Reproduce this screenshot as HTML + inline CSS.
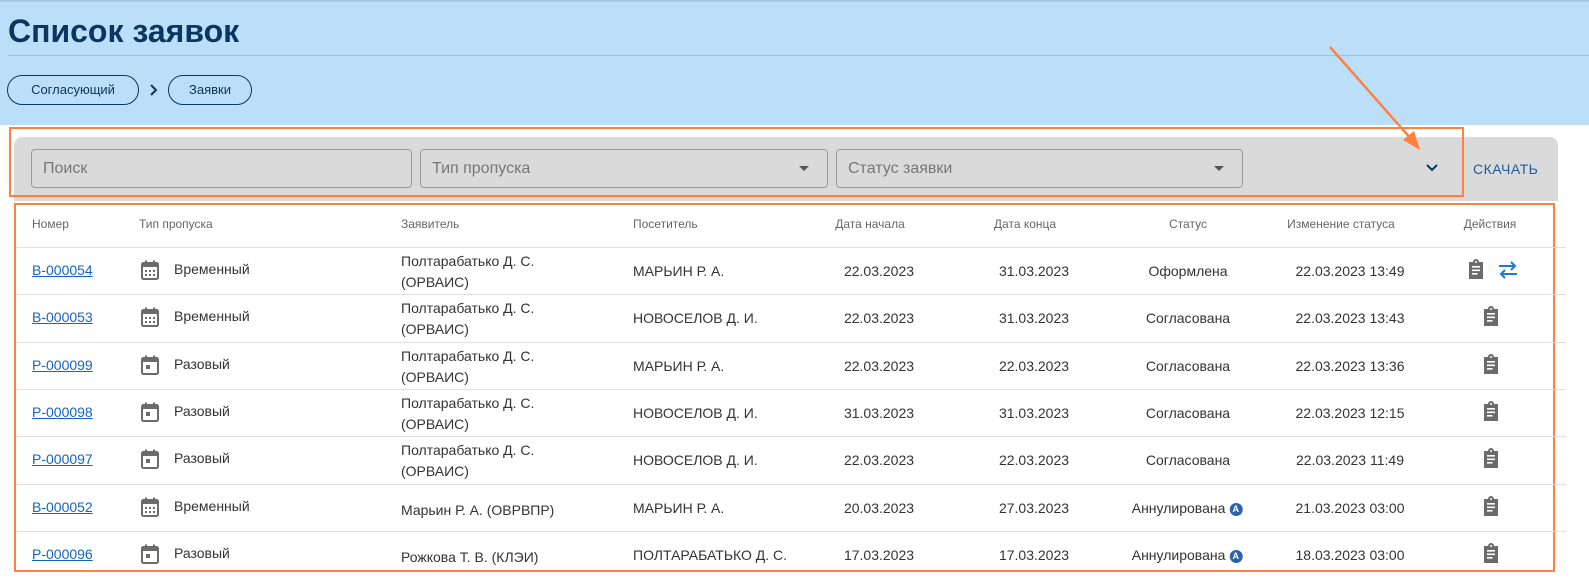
<!DOCTYPE html>
<html><head><meta charset="utf-8"><style>
*{margin:0;padding:0;box-sizing:border-box}
html,body{width:1589px;height:585px;overflow:hidden}
body{background:#fff;font-family:"Liberation Sans",Arial,sans-serif;color:#333}
#w{position:relative;width:1589px;height:585px;overflow:hidden}
.hdr{position:absolute;left:0;top:0;width:1589px;height:125px;background:#bbdff9;border-top:2px solid #a9c9e3}
h1{position:absolute;left:8px;top:13px;font-size:32px;font-weight:bold;color:#0c3560}
.hl{position:absolute;left:8px;right:0;top:55px;height:1px;background:#9fc0dc}
.bc{position:absolute;top:75px;height:30px;border:1.3px solid #0c3560;border-radius:15px;font-size:13px;color:#0c3560;line-height:28px;text-align:center}
.panel{position:absolute;left:14px;top:137px;width:1544px;height:64px;background:#dadada;border-radius:8px 8px 0 0}
.inp{position:absolute;top:149px;height:39px;border:1px solid #9a9a9a;border-radius:4px;font-size:16px;color:#777;line-height:37px;padding-left:11px}
.caret{position:absolute;right:18px;top:16px;width:0;height:0;border-left:5px solid transparent;border-right:5px solid transparent;border-top:5px solid #555}
.ob{position:absolute;border:2.5px solid #ff8040}
.t{position:absolute;font-size:14px;color:#333;white-space:nowrap}
.th{position:absolute;font-size:12px;color:#666;white-space:nowrap;top:217px}
.line{position:absolute;left:16px;width:1550px;height:1px;background:#e0e0e0}
a{color:#1565c0;text-decoration:underline}
.c{transform:translateX(-50%)}
</style></head><body><div id="w">
<div class="hdr"></div>
<h1>Список заявок</h1>
<div class="hl"></div>
<div class="bc" style="left:7px;width:132px">Согласующий</div>
<svg style="position:absolute;left:149px;top:84px" width="10" height="12"><path d="M2 1 L7 6 L2 11" stroke="#0c3560" stroke-width="2" fill="none"/></svg>
<div class="bc" style="left:168px;width:84px">Заявки</div>

<div class="panel"></div>
<div class="inp" style="left:31px;width:381px">Поиск</div>
<div class="inp" style="left:420px;width:408px">Тип пропуска<div class="caret"></div></div>
<div class="inp" style="left:836px;width:407px">Статус заявки<div class="caret"></div></div>
<svg style="position:absolute;left:1425px;top:163px" width="14" height="10"><path d="M2 2 L7 7 L12 2" stroke="#0c3560" stroke-width="2" fill="none"/></svg>
<div style="position:absolute;left:1473px;top:161px;font-size:14px;color:#1e5a9c;letter-spacing:0.5px">СКАЧАТЬ</div>
<div class="ob" style="left:9px;top:127px;width:1455px;height:70px"></div>
<svg style="position:absolute;left:0;top:0" width="1589" height="585"><line x1="1330" y1="47" x2="1412" y2="140" stroke="#ff8040" stroke-width="2.5"/><path d="M1420 150 L1403 140 L1414 131 Z" fill="#ff8040"/></svg>

<div class="ob" style="left:14px;top:203px;width:1541px;height:369px"></div>
<div class="th" style="left:32px">Номер</div>
<div class="th" style="left:139px">Тип пропуска</div>
<div class="th" style="left:401px">Заявитель</div>
<div class="th" style="left:633px">Посетитель</div>
<div class="th c" style="left:870px">Дата начала</div>
<div class="th c" style="left:1025px">Дата конца</div>
<div class="th c" style="left:1188px">Статус</div>
<div class="th c" style="left:1341px">Изменение статуса</div>
<div class="th c" style="left:1490px">Действия</div>

<div id="rows"></div>
</div>
<script>
const R=[["В-000054","Временный","Полтарабатько Д. С.|(ОРВАИС)","МАРЬИН Р. А.","22.03.2023","31.03.2023","Оформлена","22.03.2023 13:49",1],
["В-000053","Временный","Полтарабатько Д. С.|(ОРВАИС)","НОВОСЕЛОВ Д. И.","22.03.2023","31.03.2023","Согласована","22.03.2023 13:43"],
["Р-000099","Разовый","Полтарабатько Д. С.|(ОРВАИС)","МАРЬИН Р. А.","22.03.2023","22.03.2023","Согласована","22.03.2023 13:36"],
["Р-000098","Разовый","Полтарабатько Д. С.|(ОРВАИС)","НОВОСЕЛОВ Д. И.","31.03.2023","31.03.2023","Согласована","22.03.2023 12:15"],
["Р-000097","Разовый","Полтарабатько Д. С.|(ОРВАИС)","НОВОСЕЛОВ Д. И.","22.03.2023","22.03.2023","Согласована","22.03.2023 11:49"],
["В-000052","Временный","Марьин Р. А. (ОВРВПР)","МАРЬИН Р. А.","20.03.2023","27.03.2023","Аннулирована","21.03.2023 03:00"],
["Р-000096","Разовый","Рожкова Т. В. (КЛЭИ)","ПОЛТАРАБАТЬКО Д. С.","17.03.2023","17.03.2023","Аннулирована","18.03.2023 03:00"]];
let h="";
const clip=(x,y)=>`<svg style="position:absolute;left:${x}px;top:${y}px" width="18" height="20" viewBox="0 0 18 20"><path d="M2 3h4a3 3 0 0 1 6 0h4v17H2z" fill="#6b6b6b"/><rect x="5" y="7" width="8" height="1.6" fill="#fff"/><rect x="5" y="10.5" width="8" height="1.6" fill="#fff"/><rect x="5" y="14" width="5.5" height="1.6" fill="#fff"/><circle cx="9" cy="3" r="1" fill="#fff"/></svg>`;
R.forEach((r,i)=>{const y=247+i*47.3;const m=y+23;
h+=`<div class="line" style="top:${y}px"></div>`;
h+=`<div class="t" style="left:32px;top:${m-8}px"><a>${r[0]}</a></div>`;
const tmp=r[1]=="Временный";
h+=`<svg style="position:absolute;left:140px;top:${m-10}px" width="20" height="20" viewBox="0 0 20 20"><rect x="2" y="3" width="16" height="16" rx="1.5" fill="none" stroke="#6b6b6b" stroke-width="2"/><rect x="2" y="3" width="16" height="4" fill="#6b6b6b"/><rect x="5" y="0.5" width="2" height="4" fill="#6b6b6b"/><rect x="13" y="0.5" width="2" height="4" fill="#6b6b6b"/>${tmp?'<g fill="#6b6b6b"><rect x="5" y="10" width="2" height="2"/><rect x="9" y="10" width="2" height="2"/><rect x="13" y="10" width="2" height="2"/><rect x="5" y="14" width="2" height="2"/><rect x="9" y="14" width="2" height="2"/><rect x="13" y="14" width="2" height="2"/></g>':'<rect x="6" y="10" width="4" height="4" fill="#6b6b6b"/>'}</svg>`;
h+=`<div class="t" style="left:174px;top:${m-9}px">${r[1]}</div>`;
const z=r[2].split("|");
h+=`<div class="t" style="left:401px;top:${z.length>1?m-19:m-7}px;line-height:21px">${z.join("<br>")}</div>`;
h+=`<div class="t" style="left:633px;top:${m-7}px">${r[3]}</div>`;
h+=`<div class="t c" style="left:879px;top:${m-7}px">${r[4]}</div>`;
h+=`<div class="t c" style="left:1034px;top:${m-7}px">${r[5]}</div>`;
const an=r[6]=="Аннулирована";
h+=`<div class="t c" style="left:${an?1187:1188}px;top:${m-7}px">${r[6]}${an?' <span style="display:inline-block;width:13px;height:13px;border-radius:50%;background:#2b64a8;color:#fff;font-size:9px;font-weight:bold;text-align:center;line-height:13px;vertical-align:1px">A</span>':''}</div>`;
h+=`<div class="t c" style="left:1350px;top:${m-7}px">${r[7]}</div>`;
if(r[8]){h+=clip(1467,m-11);h+=`<svg style="position:absolute;left:1497px;top:${m-9}px" width="22" height="18" viewBox="0 0 22 18"><path d="M2 5h16M14 1l4 4-4 4M20 13H4M8 9l-4 4 4 4" stroke="#1e7ad6" stroke-width="2" fill="none"/></svg>`}
else h+=clip(1482,m-11);
});
document.getElementById("rows").innerHTML=h;
</script>
</body></html>
